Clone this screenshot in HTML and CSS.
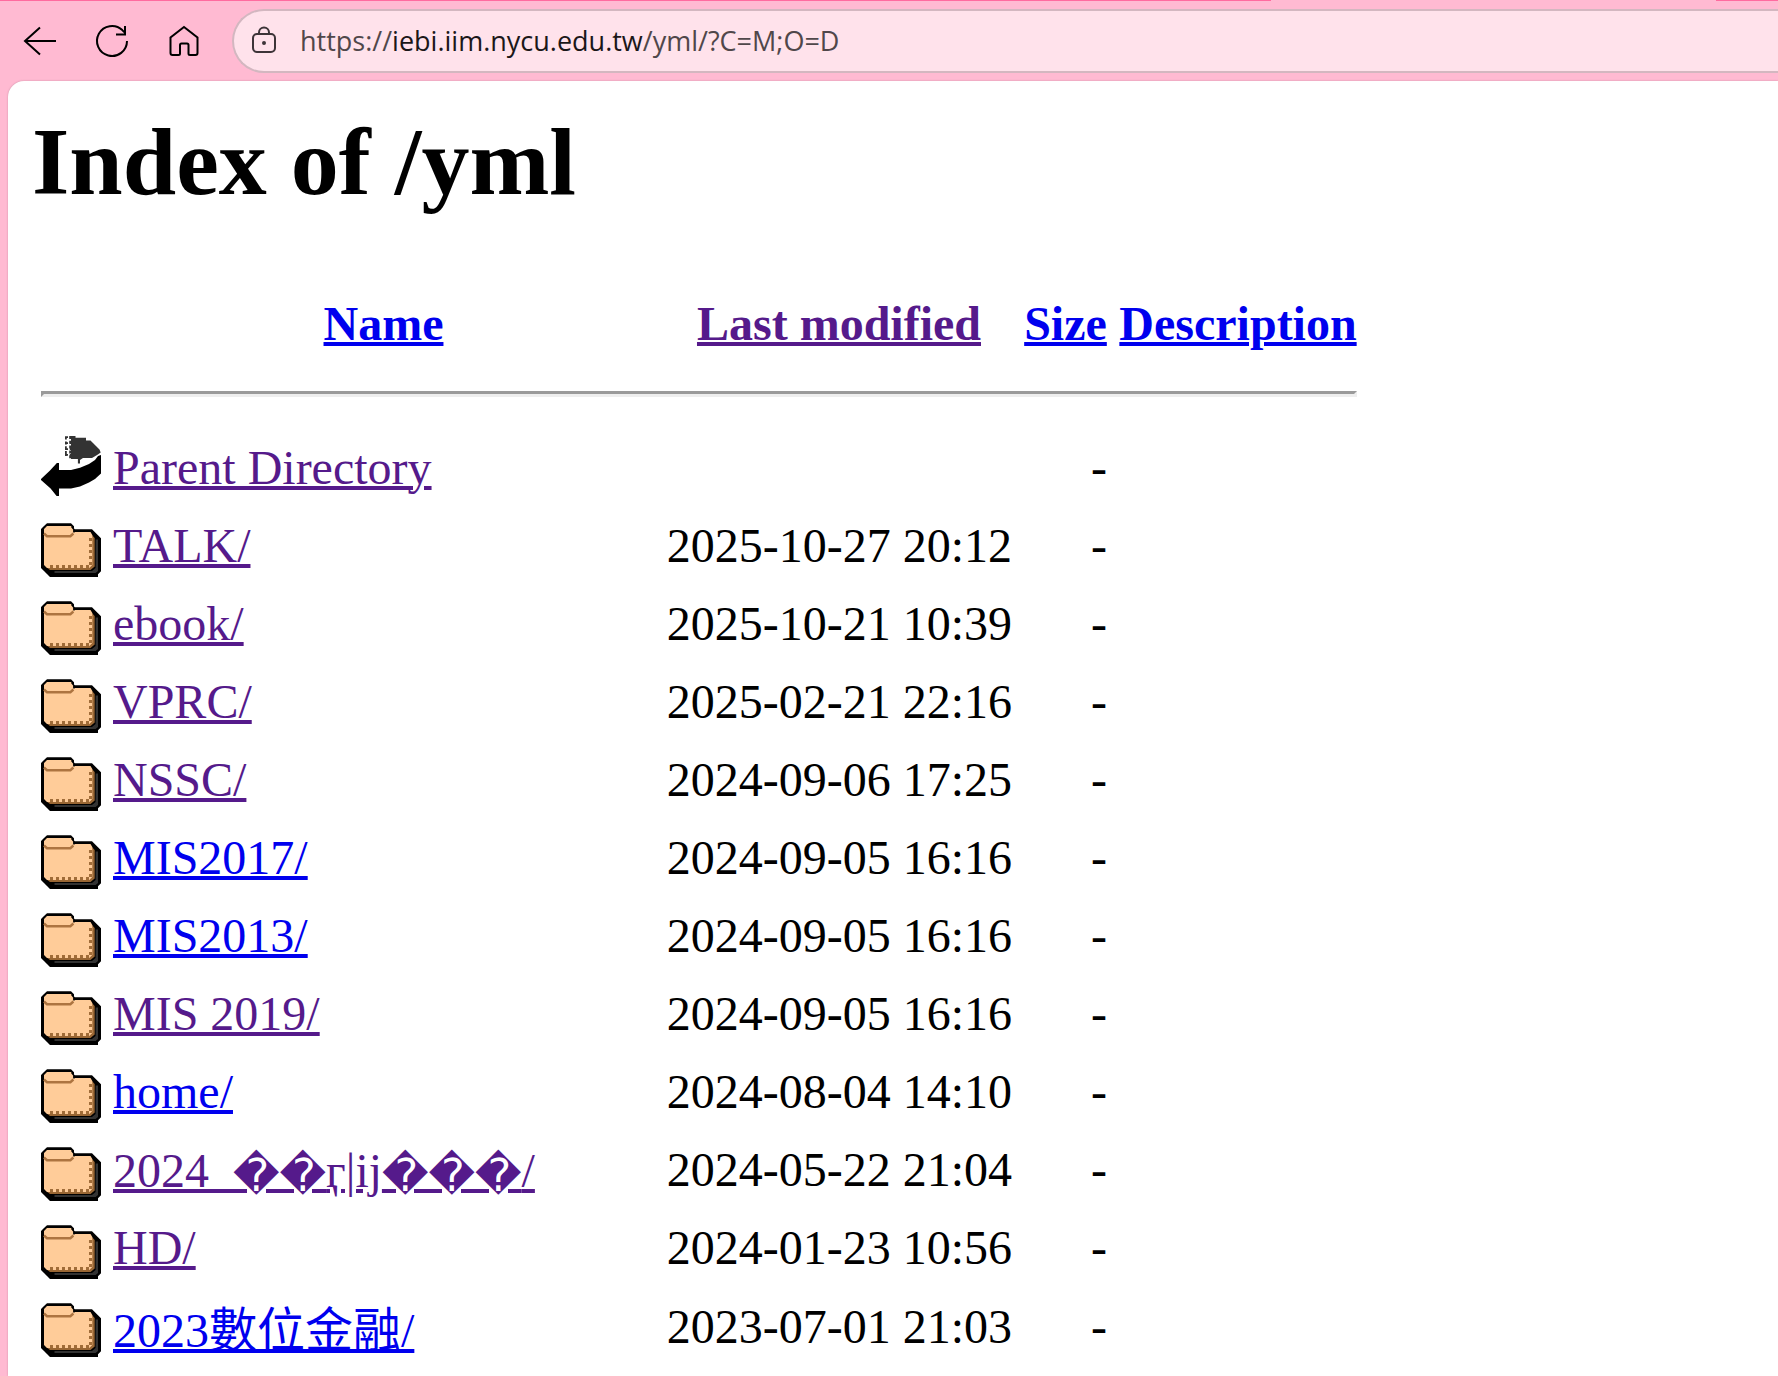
FILE: index.html
```html
<!DOCTYPE html>
<html lang="en">
<head>
  <meta charset="UTF-8" />
  <title>Index of /yml</title>
  <link rel="stylesheet" href="styles.css">
</head>
<body>

  <svg width="0" height="0" class="sprites">
    <symbol id="folder" viewBox="0 0 20 22">
      <path d="M2 4.100h8l1 1v1h6l2 2 1 1v11l-1 1v.900H3l-1-1-1-1-1-1V6l1-1z" fill="#000" />
      <path d="M18.200 9.500h.8V20l-.8.700H4.500v-.7h12.500l1.200-1z" fill="#333" />
      <path d="M17 8l.9 1v9.500L16.500 19.700H3l-1-.8h14z" fill="#963" />
      <path d="M2 5h8l.8 1v1H16.500l.6 1v10l-1 1H2l-1-1V6z" fill="#fc9" />
      <path d="M1 7.500l1 .9h7.800l1-.9" fill="none" stroke="#ad7440" stroke-width=".8" />
      <path d="M10.200 5.200l.8 1v1" fill="none" stroke="#000" stroke-width=".5" />
      <path d="M3 18.500h13M16.500 9v9" fill="none" stroke="#a06c38" stroke-dasharray="1 1" />
    </symbol>
    <symbol id="back" viewBox="0 0 20 22">
      <path d="M10 1h1.500v.6H15v.9h1.500l1 1 1 1 1 1 .4 1-1.200.8-1.700 1h-3l-1 .7V10.200h-.7V8.700H10z" fill="#333" />
      <path d="M8 1.400h2.500M8 3.400h2.500M8 5.400h2.500M8 7.300h2.500M9.700 1v7.500M8.300 1.200v6.500" fill="none" stroke="#333" stroke-width=".6" stroke-dasharray="1 .6" />
      <path d="M20 7.300V13.500l-2 1.800-2 1.200-3 1.300-3 .7H6V21H5.200L3.200 18.500 0 15.700v-.4L3 12.500 5.300 10H6v2.300h4l3-.7 3-1.300 2-1.300 1-1.300z" fill="#000" />
    </symbol>
  </svg>

  <div class="toolbar">
    <svg class="nav-icon" viewBox="0 0 36 36"><path d="M34 18H3M18 4.500L3 18 18 31.500" /></svg>
    <svg class="nav-icon" viewBox="0 0 36 36"><path d="M33 18a15 15 0 1 1-4.700-10.900l3 3M31 3v8.500h-9" /></svg>
    <svg class="nav-icon" viewBox="0 0 36 36"><path d="M18 4L31.500 14.500V30q0 2-2 2H24q-1.500 0-1.500-1.500V22q0-1.500-1.500-1.500h-5.500q-1.500 0-1.500 1.500v8.500q0 1.500-1.500 1.500H6.500q-2 0-2-2V14.500z" /></svg>
    <div class="address">
      <svg class="lock" viewBox="0 0 26 30"><rect x="2" y="9" width="22" height="18" rx="4" /><path d="M8 9V7.500a5 5 0 0 1 10 0V9" /><circle cx="13" cy="18" r="1" /></svg>
      <span class="url"><span class="dim">https://</span>iebi.iim.nycu.edu.tw<span class="dim">/yml/?C=M;O=D</span></span>
    </div>
  </div>

  <div class="page">
    <h1>Index of /yml</h1>
    <table>
      <tr class="head">
        <th class="icon"></th>
        <th class="name"><a href="#">Name</a></th>
        <th class="date"><a href="#" class="visited">Last modified</a></th>
        <th class="size"><a href="#">Size</a></th>
        <th class="desc"><a href="#">Description</a></th>
      </tr>
      <tr><th colspan="5"><hr></th></tr>
      <tr><td><svg class="ico"><use href="#back" /></svg></td><td class="txt"><a href="#" class="visited">Parent Directory</a></td><td></td><td class="txt num">-</td></tr>
      <tr><td><svg class="ico"><use href="#folder" /></svg></td><td class="txt"><a href="#" class="visited">TALK/</a></td><td class="txt num">2025-10-27 20:12</td><td class="txt num">-</td></tr>
      <tr><td><svg class="ico"><use href="#folder" /></svg></td><td class="txt"><a href="#" class="visited">ebook/</a></td><td class="txt num">2025-10-21 10:39</td><td class="txt num">-</td></tr>
      <tr><td><svg class="ico"><use href="#folder" /></svg></td><td class="txt"><a href="#" class="visited">VPRC/</a></td><td class="txt num">2025-02-21 22:16</td><td class="txt num">-</td></tr>
      <tr><td><svg class="ico"><use href="#folder" /></svg></td><td class="txt"><a href="#" class="visited">NSSC/</a></td><td class="txt num">2024-09-06 17:25</td><td class="txt num">-</td></tr>
      <tr><td><svg class="ico"><use href="#folder" /></svg></td><td class="txt"><a href="#">MIS2017/</a></td><td class="txt num">2024-09-05 16:16</td><td class="txt num">-</td></tr>
      <tr><td><svg class="ico"><use href="#folder" /></svg></td><td class="txt"><a href="#">MIS2013/</a></td><td class="txt num">2024-09-05 16:16</td><td class="txt num">-</td></tr>
      <tr><td><svg class="ico"><use href="#folder" /></svg></td><td class="txt"><a href="#" class="visited">MIS 2019/</a></td><td class="txt num">2024-09-05 16:16</td><td class="txt num">-</td></tr>
      <tr><td><svg class="ico"><use href="#folder" /></svg></td><td class="txt"><a href="#">home/</a></td><td class="txt num">2024-08-04 14:10</td><td class="txt num">-</td></tr>
      <tr><td><svg class="ico"><use href="#folder" /></svg></td><td class="mixed"><a href="#" class="visited">2024_<span class="bad">&#xFFFD;&#xFFFD;</span>ӷ|ĳ<span class="bad">&#xFFFD;&#xFFFD;&#xFFFD;</span>/</a></td><td class="txt num">2024-05-22 21:04</td><td class="txt num">-</td></tr>
      <tr><td><svg class="ico"><use href="#folder" /></svg></td><td class="txt"><a href="#" class="visited">HD/</a></td><td class="txt num">2024-01-23 10:56</td><td class="txt num">-</td></tr>
      <tr class="tall"><td><svg class="ico"><use href="#folder" /></svg></td><td class="cjk"><a href="#">2023數位金融/</a></td><td class="num">2023-07-01 21:03</td><td class="num">-</td></tr>
    </table>
  </div>

</body>
</html>
```

FILE: styles.css
```css
body {
  margin: 0;
  height: 1376px;
  overflow: hidden;
  display: flex;
  flex-direction: column;
  background: #ffbad2;
}

.sprites {
  position: absolute;
}

.toolbar {
  display: flex;
  align-items: center;
  flex: none;
  box-sizing: border-box;
  height: 81px;
  padding: 0 0 0 22px;
  gap: 36px;
  background:
    linear-gradient(#ff6b9f, #ff6b9f) 0 0 / 1271px 1px no-repeat,
    linear-gradient(#ff6b9f, #ff6b9f) 100% 0 / 62px 1px no-repeat,
    #ffbad2;
}

.nav-icon {
  width: 36px;
  height: 36px;
  fill: none;
  stroke: #000;
  stroke-width: 2;
}

.address {
  display: flex;
  align-items: center;
  flex: 1;
  box-sizing: border-box;
  height: 64px;
  margin-left: -6px;
  padding-left: 17px;
  border: 2px solid #d3b7c0;
  border-right: 0;
  border-radius: 32px 0 0 32px;
  background: #ffe2eb;
}

.lock {
  width: 26px;
  height: 30px;
  margin: 0 23px 2px 0;
  fill: none;
  stroke: #3d3438;
  stroke-width: 2;
}

.url {
  font: 27px "Open Sans", sans-serif;
  color: #1b1719;
  white-space: nowrap;
}

.dim {
  color: #50474a;
}

.page {
  flex: 1;
  margin-left: 8px;
  padding-left: 24px;
  border-radius: 16px 0 0 0;
  background: #fff;
  box-shadow: 0 0 2px #c98ba0;
  font: 48px "Liberation Serif", "Noto Sans CJK TC", serif;
  line-height: 55px;
}

h1 {
  margin: 26px 0 68px;
  font-size: 96px;
  line-height: 110px;
}

table {
  table-layout: fixed;
  width: 1334px;
  border-spacing: 6px;
}

th,
td {
  padding: 3px;
  white-space: nowrap;
}

.head th {
  padding: 5px 3px 7px;
}

td {
  height: 66px;
}

.txt {
  padding: 4px 3px 2px;
}

.icon { width: 60px; }
.name { width: 541px; }
.date { width: 346px; }
.size { width: 83px; }

hr {
  margin: 24px 0;
  border: 3px solid;
  border-color: #9a9a9a #eee #eee #9a9a9a;
}

a {
  color: #00e;
  text-decoration: underline;
  text-decoration-thickness: 4px;
}

.visited {
  color: #551a8b;
}

.num {
  text-align: right;
}

.ico {
  display: block;
  width: 60px;
  height: 66px;
}

/* rows with fallback glyphs sit a little lower */
.mixed {
  height: 61px;
  padding-top: 8px;
}

.tall .num {
  height: 62px;
  padding-top: 7px;
}

.tall .cjk {
  height: 56px;
  padding: 14px 3px 2px;
}

.bad {
  font-family: "DejaVu Sans", sans-serif;
  font-size: 45.4px;
  line-height: 0;
  vertical-align: -4px;
}
```
